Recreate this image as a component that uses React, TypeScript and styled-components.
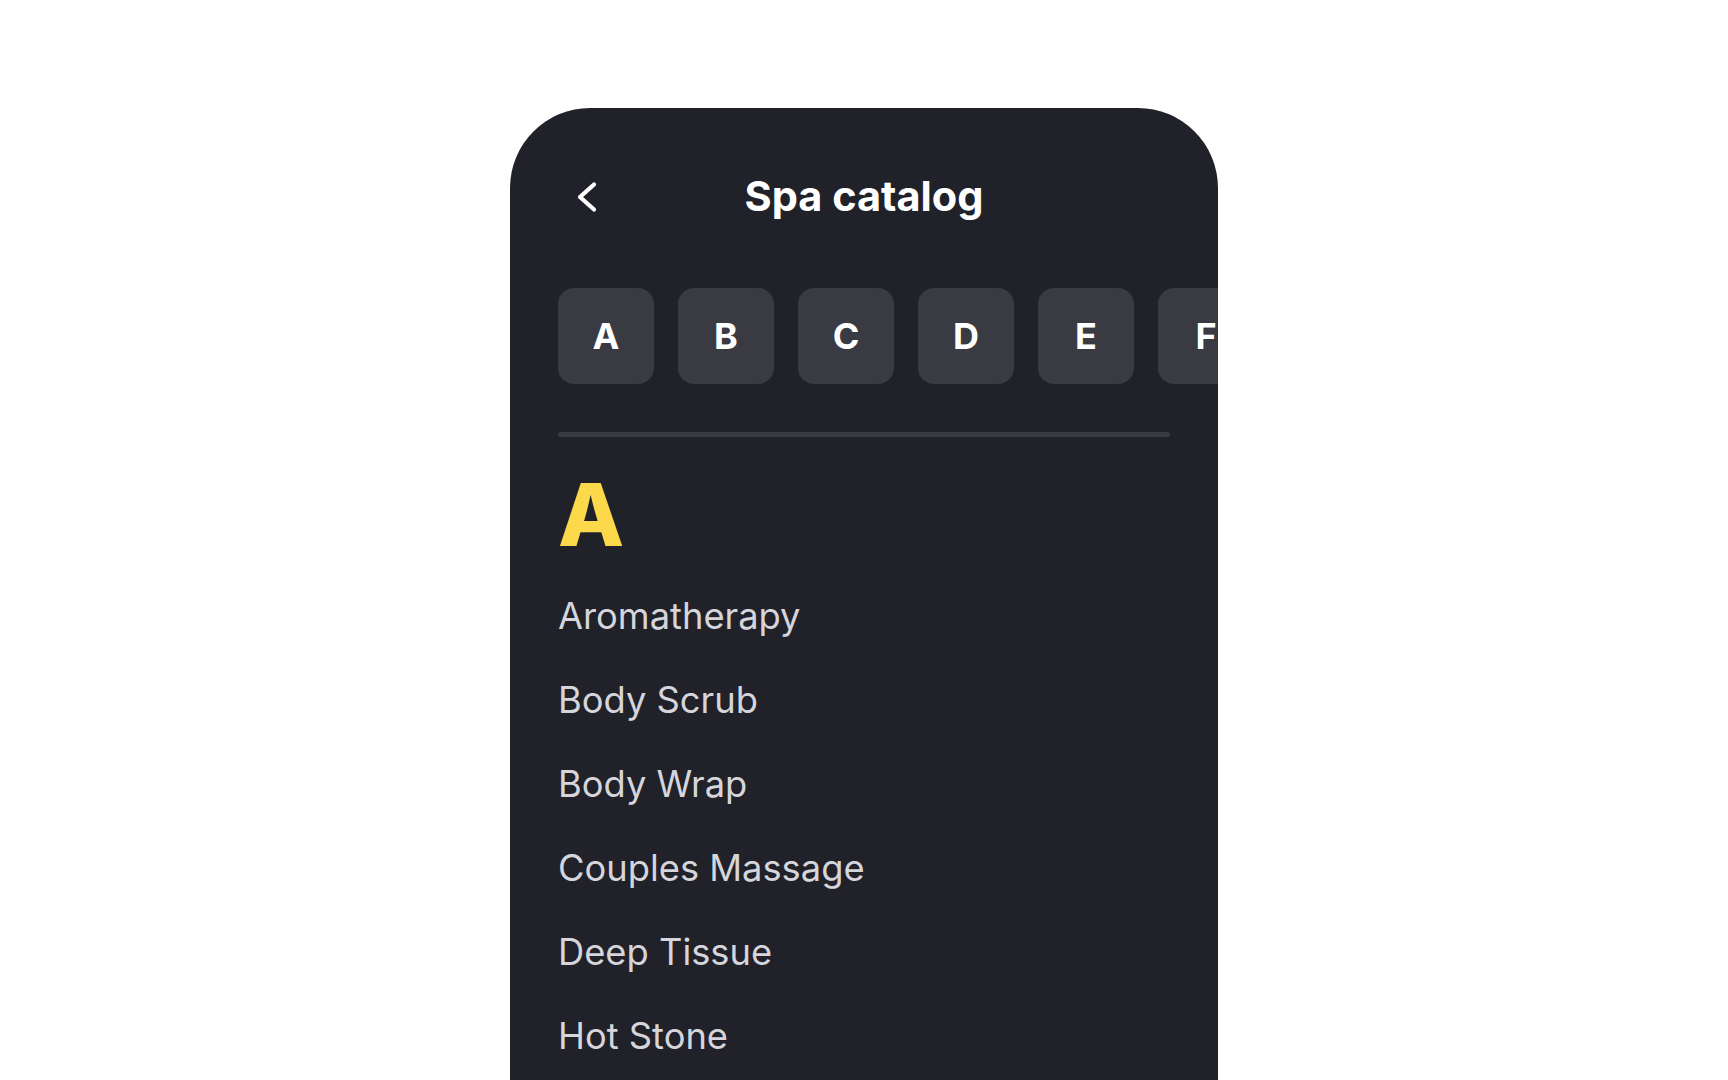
import React from "react";
import styled, { createGlobalStyle } from "styled-components";

const GlobalStyle = createGlobalStyle`
  html, body {
    margin: 0;
    padding: 0;
    background: #ffffff;
    overflow: hidden;
  }
  body {
    font-family: Inter, "Noto Sans", "Liberation Sans", sans-serif;
    -webkit-font-smoothing: antialiased;
  }
  * { box-sizing: border-box; }
`;

const Page = styled.div`
  height: 100vh;
  display: flex;
  justify-content: center;
  align-items: flex-start;
  padding-top: 108px;
`;

const Phone = styled.div`
  width: 708px;
  height: 1000px;
  flex: 0 0 auto;
  background: #202129;
  border-radius: 80px 80px 0 0;
  overflow: hidden;
  padding: 49px 48px 0;
  display: flex;
  flex-direction: column;
`;

const Header = styled.header`
  display: grid;
  grid-template-columns: 58px 1fr 58px;
  align-items: center;
  height: 80px;
`;

const BackButton = styled.button`
  width: 58px;
  height: 48px;
  padding: 0;
  border: none;
  background: transparent;
  display: flex;
  align-items: center;
  justify-content: center;
  color: #ffffff;
  cursor: pointer;
`;

const Title = styled.h1`
  margin: 0;
  text-align: center;
  font-size: 41.5px;
  line-height: 1;
  font-weight: 700;
  color: #ffffff;
`;

const LetterRow = styled.nav`
  display: flex;
  gap: 24px;
  margin-top: 51px;
`;

const LetterButton = styled.button`
  flex: 0 0 96px;
  height: 96px;
  border: none;
  border-radius: 16px;
  background: #393a42;
  color: #ffffff;
  font-family: inherit;
  font-size: 36px;
  font-weight: 700;
  display: flex;
  align-items: center;
  justify-content: center;
  padding: 0;
`;

const Divider = styled.div`
  margin-top: 48px;
  height: 5px;
  border-radius: 3px;
  background: #393a42;
`;

const SectionLetter = styled.h2`
  margin: 35px 0 0;
  font-size: 86px;
  line-height: 86px;
  font-weight: 800;
  color: #fcd94a;
`;

const List = styled.ul`
  list-style: none;
  margin: 16px 0 0;
  padding: 0;
  display: flex;
  flex-direction: column;
`;

const Item = styled.li`
  height: 84px;
  display: flex;
  align-items: center;
  font-size: 36.3px;
  font-weight: 400;
  color: #d5d5db;
`;

const letters = "ABCDEFGHIJKLMNOPQRSTUVWXYZ".split("");
const items = [
  "Aromatherapy",
  "Body Scrub",
  "Body Wrap",
  "Couples Massage",
  "Deep Tissue",
  "Hot Stone",
];

export default function App() {
  return (
    <>
      <GlobalStyle />
      <Page>
        <Phone>
          <Header>
            <BackButton aria-label="Back">
              <svg width="24" height="34" viewBox="0 0 24 34" fill="none">
                <polyline
                  points="19,4.5 5,17 19,29.5"
                  stroke="currentColor"
                  strokeWidth="4.2"
                  strokeLinecap="round"
                  strokeLinejoin="round"
                />
              </svg>
            </BackButton>
            <Title>Spa catalog</Title>
            <span />
          </Header>
          <LetterRow>
            {letters.map((l) => (
              <LetterButton key={l}>{l}</LetterButton>
            ))}
          </LetterRow>
          <Divider />
          <SectionLetter>A</SectionLetter>
          <List>
            {items.map((it) => (
              <Item key={it}>{it}</Item>
            ))}
          </List>
        </Phone>
      </Page>
    </>
  );
}
